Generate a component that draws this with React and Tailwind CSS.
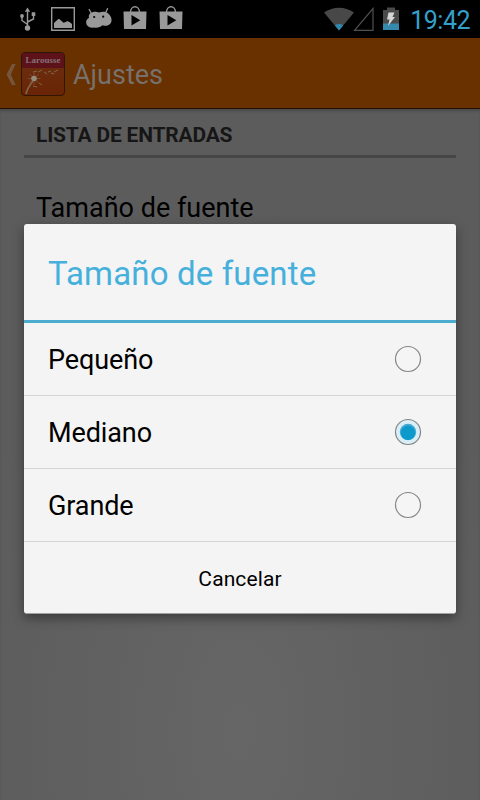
import { useState } from 'react';

const options = ['Pequeño', 'Mediano', 'Grande'];

function UsbIcon() {
  return (
    <svg width="18" height="24" viewBox="0 0 18 24" fill="none" stroke="#999" strokeWidth="1.4">
      <path d="M7.500 3v17M7.500 17.500L2 13.500V9M7.500 15L13.500 12V7" />
      <path d="M4.800 4.700L7.500 .5l2.700 4.200z" fill="#999" stroke="none" />
      <circle cx="2" cy="9" r="1.900" fill="#999" stroke="none" />
      <path d="M11.700 5.200h3.600v3.800h-3.600z" fill="#999" stroke="none" />
      <circle cx="7.500" cy="21" r="2.700" fill="#999" stroke="none" />
    </svg>
  );
}

function PictureIcon() {
  return (
    <svg width="24" height="24" viewBox="0 0 24 24">
      <path d="M.7.7h22.6v22.6H.7z" fill="none" stroke="#999" strokeWidth="1.4" />
      <path d="M3 21v-5l4-3.800c1-.6 2 .2 3 1.300l2.500 2.200 2.200-.8c2-1.200 3.300-.3 6.300 2.100v4z" fill="#999" />
    </svg>
  );
}

function DroidIcon() {
  return (
    <svg width="26" height="20" viewBox="0 0 26 20" fill="#999">
      <path d="M3.200 1.500l2.500 4.500M21.500.7L19.500 5" stroke="#999" strokeWidth="1.300" strokeLinecap="round" />
      <path d="M4 5.500C6.500 3.500 10 3.200 13 4.500c3-1.200 7-1.200 9.500 1.200 3.500 3.300 4 7.500 1.500 10.300-2 2-4.500 2.200-7.500 1.200-2 2-5 3-8.500 2.300C3 20.500-.3 17.500.2 13.500c.3-1.800 1.500-2.800 2.800-3.500C2.500 8.500 2.800 6.800 4 5.500z" />
      <circle cx="8.200" cy="9" r="1.100" fill="#000" />
      <circle cx="17.200" cy="8.700" r="1.100" fill="#000" />
    </svg>
  );
}

function PlayStoreIcon() {
  return (
    <svg width="24" height="24" viewBox="0 0 24 24">
      <path d="M7.500 6.500C7.500-1.200 16.500-1.200 16.500 6.500" fill="none" stroke="#999" strokeWidth="1.300" />
      <path d="M.5 5.500h23l-.5 17.500H1z" fill="#999" />
      <path d="M8.500 9l8.800 5.200-8.800 5.300z" fill="#000" />
    </svg>
  );
}

function StatusBar() {
  return (
    <div className="flex h-[38px] items-center justify-between bg-black">
      <div className="flex items-center pl-5">
        <UsbIcon />
        <div className="ml-[13px]"><PictureIcon /></div>
        <div className="-mt-0.5 ml-[11px]"><DroidIcon /></div>
        <div className="-mt-0.5 ml-[11px]"><PlayStoreIcon /></div>
        <div className="-mt-0.5 ml-3"><PlayStoreIcon /></div>
      </div>
      <div className="flex items-center pr-[10px]">
        <svg width="30" height="24" viewBox="0 0 30 24">
          <path d="M0 5.500C9-.8 21-.8 30 5.500L15 23.500z" fill="#484848" />
          <path d="M10.800 18.300c2.500-1.600 5.900-1.600 8.400 0L15 23.500z" fill="#2f88ae" />
        </svg>
        <svg className="-ml-px" width="21" height="24" viewBox="0 0 21 24">
          <path d="M1.500 23.300H20V1.500z" fill="none" stroke="#505050" strokeWidth="1.200" />
        </svg>
        <svg className="ml-[9px]" width="16" height="24" viewBox="0 0 16 24">
          <path d="M0 3h4V.5h8V3h4v14H0z" fill="#4a4a4a" />
          <path d="M0 16.500h16v6.500H0z" fill="#3489ad" />
          <path d="M5.500 5.500h6l-2 4.500H12L5 19l1.500-6.500H4z" fill="#d5d5d5" />
        </svg>
        <span className="ml-[11px] pt-0.5 text-[25px] leading-none tracking-[-0.5px] text-[#34a0ca]">19:42</span>
      </div>
    </div>
  );
}

function AppLogo() {
  return (
    <div className="flex h-11 w-11 flex-col overflow-hidden rounded-[4px] border border-[#301405] bg-linear-to-b from-[#6b3010] to-[#6a2406]">
      <div className="h-[15px] bg-[#5d1219] text-center font-['Liberation_Serif',serif] text-[9px] leading-[15px] font-bold text-[#85707a]">
        Larousse
      </div>
      <svg width="42" height="27" viewBox="0 0 42 27" fill="none" stroke="#82664b">
        <path d="M4 26c1-5 3-8 7-13" strokeWidth="1.600" />
        <path d="M12 4v13M5.500 10.500h13M7.500 6l9 9M7.500 15l9-9" strokeWidth=".7" strokeOpacity=".8" />
        <circle cx="12" cy="10.500" r="2.800" fill="#938b7b" stroke="none" />
        <path d="M11 4l4-1M16 4l4-2M22 4l3 2M26 4l3-1M29 5l3 1M32 4l4-2M17 15l3 2M11 18l4 1" strokeWidth="1" />
      </svg>
    </div>
  );
}

function ActionBar() {
  return (
    <div className="flex h-[71px] items-center border-b border-[#251205] bg-[#693000]">
      <svg className="mt-0.5 ml-[6px]" width="11" height="23" viewBox="0 0 11 23">
        <path d="M6 1h3.700L4.800 11.500 9.700 22H6L.5 11.500z" fill="#74563f" />
      </svg>
      <div className="mt-px ml-[4px]"><AppLogo /></div>
      <h1 className="mt-[5px] ml-2 text-[27px] leading-none text-[#77716c]">Ajustes</h1>
    </div>
  );
}

function Radio({ checked }) {
  return (
    <svg width="28" height="28" viewBox="0 0 28 28">
      <circle cx="14" cy="14" r="12.500" fill={checked ? '#d9eef7' : '#f5f5f5'} stroke="#868686" strokeWidth="1.200" />
      {checked && (
        <>
          <circle cx="14" cy="14" r="8.200" fill="#4aa9cf" />
          <circle cx="14" cy="14.800" r="7.200" fill="#0c99cc" />
        </>
      )}
    </svg>
  );
}

export default function App() {
  const [selected, setSelected] = useState('Mediano');

  return (
    <div className="relative h-[800px] w-[480px] overflow-hidden bg-[#5c5c5c] font-[Roboto,sans-serif]">
      <StatusBar />
      <ActionBar />

      {/* Settings list */}
      <div className="h-[691px] bg-[radial-gradient(ellipse_280px_520px_at_50%_90%,#666666,#5c5c5c)] px-6 shadow-[inset_0_3px_3px_-1px_#48484a]">
        <h2 className="h-[49px] border-b-[3px] border-[#464646] pt-[13px] pl-3 text-[21px] leading-[26px] font-bold tracking-[-0.2px] text-[#161616]">
          LISTA DE ENTRADAS
        </h2>
        <div className="pt-[34px] pl-3 text-[27px] leading-8 text-black">Tamaño de fuente</div>
      </div>

      {/* Dialog */}
      <div
        role="dialog"
        className="absolute top-[224px] left-6 h-[390px] w-[432px] rounded-[3px] border-b border-[#a0a0a0] bg-[#f4f4f4] shadow-[0_4px_12px_rgba(0,0,0,0.4)]"
      >
        <div className="flex h-[99px] items-center border-b-[3px] border-[#4bacd0] pt-[3px] pl-6 text-[33px] tracking-[0.15px] text-[#46b0dc]">
          <span>Tamaño de fuente</span>
        </div>
        {options.map((name) => (
          <button
            key={name}
            onClick={() => setSelected(name)}
            className="flex h-[73px] w-full items-center justify-between border-b border-[#d4d4d4] pr-[34px] pl-6 text-[27px] tracking-[-0.1px] text-black"
          >
            <span className="pt-0.5">{name}</span>
            <Radio checked={selected === name} />
          </button>
        ))}
        <button className="flex h-[71px] w-full items-center justify-center pt-1 text-[21px] tracking-[0.1px] text-black">
          <span>Cancelar</span>
        </button>
      </div>
    </div>
  );
}
